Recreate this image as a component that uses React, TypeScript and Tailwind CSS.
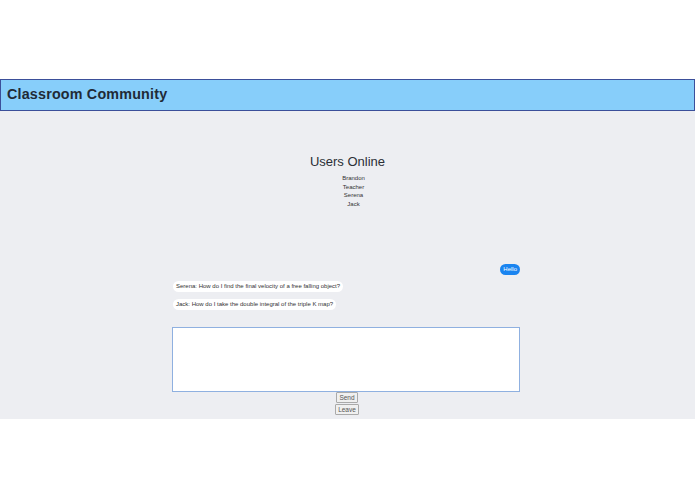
import React from "react";

export default function App() {
  return (
    <div className="w-[695px] min-h-[494px] bg-white" style={{ fontFamily: '"Liberation Sans", Arial, sans-serif' }}>
      <div className="h-[79px]" />
      <header className="h-[32px] bg-[#87cefa] border border-[#3b4f9a] flex items-center pl-[6px]">
        <h1 className="text-[14.3px] font-bold text-[#1f2a36] tracking-[0.2px]">Classroom Community</h1>
      </header>
      <main className="bg-[#edeef2] h-[308px] flex flex-col items-center pt-[43px]">
        <h2 className="text-[13px] leading-[16px] text-[#2b2f36]">Users Online</h2>
        <ul className="flex flex-col items-center text-[6px] leading-[8.6px] text-[#333] pl-[12px] mt-[4px]">
          <li>Brandon</li>
          <li>Teacher</li>
          <li>Serena</li>
          <li>Jack</li>
        </ul>
        <div className="w-[348px] mr-[3px] mt-[56px] flex flex-col">
          <div className="flex justify-end">
            <span className="bg-[#1a84f0] text-white text-[6px] leading-[11px] px-[3px] rounded-full">Hello</span>
          </div>
          <div className="mt-[6px] flex">
            <span className="bg-white text-[#333] text-[6px] leading-[11px] px-[3px] ml-[1px] rounded-full">Serena: How do I find the final velocity of a free falling object?</span>
          </div>
          <div className="mt-[7px] flex">
            <span className="bg-white text-[#333] text-[6px] leading-[11px] px-[3px] ml-[1px] rounded-full">Jack: How do I take the double integral of the triple K map?</span>
          </div>
          <textarea className="mt-[17px] h-[65px] w-[348px] bg-white border border-[#8fb0e0] resize-none outline-none" />
          <div className="flex flex-col items-center pl-[2px]">
            <button className="text-[6.5px] leading-[9px] px-[2px] border border-[#aaa] bg-[#f0f0f0] text-[#555] rounded-[1px]">Send</button>
            <button className="mt-[1px] text-[6.5px] leading-[9px] px-[2px] border border-[#aaa] bg-[#f0f0f0] text-[#555] rounded-[1px]">Leave</button>
          </div>
        </div>
      </main>
    </div>
  );
}
